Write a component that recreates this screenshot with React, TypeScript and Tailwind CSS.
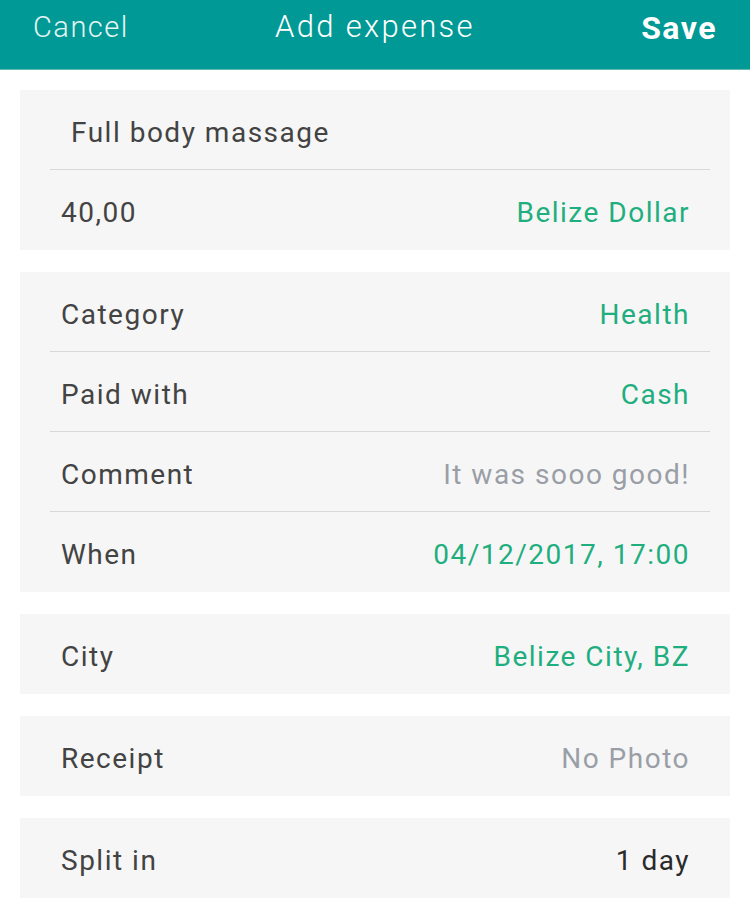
const font = { fontFamily: "Roboto, 'Liberation Sans', sans-serif" }

type Row = { label: string; value: string; tone: 'green' | 'gray' | 'dark' }

function FieldRow({ label, value, tone, divider }: Row & { divider: boolean }) {
  const valueColor =
    tone === 'green' ? 'text-[#1fae7e]' : tone === 'gray' ? 'text-[#9a9ea6]' : 'text-[#2a2a2a]'
  return (
    <div className="relative flex h-20 items-center justify-between pt-[5px] pl-[41px] pr-[40px]">
      <span className="text-[28px] tracking-[1.5px] text-[#434343]">{label}</span>
      <span className={`text-[28px] tracking-[1.5px] ${valueColor}`}>{value}</span>
      {divider && <div className="absolute right-5 bottom-0 left-[30px] h-px bg-[#d9d9d9]" />}
    </div>
  )
}

function Card({ rows }: { rows: Row[] }) {
  return (
    <div className="mx-5 bg-[#f6f6f6]">
      {rows.map((r, i) => (
        <FieldRow key={r.label} {...r} divider={i < rows.length - 1} />
      ))}
    </div>
  )
}

export default function App() {
  return (
    <div className="min-h-screen bg-white" style={font}>
      <header className="grid h-[70px] grid-cols-3 items-center border-b border-[#5fb8b4] bg-[#009995] px-[33px] pb-[14px] text-white">
        <span className="text-[29px] font-light tracking-[1.5px] text-white/90">Cancel</span>
        <span className="text-center text-[31px] font-light tracking-[2.3px] whitespace-nowrap">Add expense</span>
        <span className="text-right text-[32px] font-bold tracking-[1.5px]">Save</span>
      </header>

      <div className="mt-5 flex flex-col gap-[22px]">
        <div className="mx-5 bg-[#f6f6f6]">
          <div className="relative flex h-20 items-center pt-[5px] px-[51px]">
            <span className="text-[28px] tracking-[1.5px] text-[#434343]">Full body massage</span>
            <div className="absolute right-5 bottom-0 left-[30px] h-px bg-[#d9d9d9]" />
          </div>
          <div className="flex h-20 items-center justify-between pt-[5px] pl-[41px] pr-[40px]">
            <span className="text-[28px] tracking-[1.5px] text-[#434343]">40,00</span>
            <span className="text-[28px] tracking-[1.5px] text-[#1fae7e]">Belize Dollar</span>
          </div>
        </div>

        <Card
          rows={[
            { label: 'Category', value: 'Health', tone: 'green' },
            { label: 'Paid with', value: 'Cash', tone: 'green' },
            { label: 'Comment', value: 'It was sooo good!', tone: 'gray' },
            { label: 'When', value: '04/12/2017, 17:00', tone: 'green' },
          ]}
        />
        <Card rows={[{ label: 'City', value: 'Belize City, BZ', tone: 'green' }]} />
        <Card rows={[{ label: 'Receipt', value: 'No Photo', tone: 'gray' }]} />
        <Card rows={[{ label: 'Split in', value: '1 day', tone: 'dark' }]} />
      </div>
    </div>
  )
}
